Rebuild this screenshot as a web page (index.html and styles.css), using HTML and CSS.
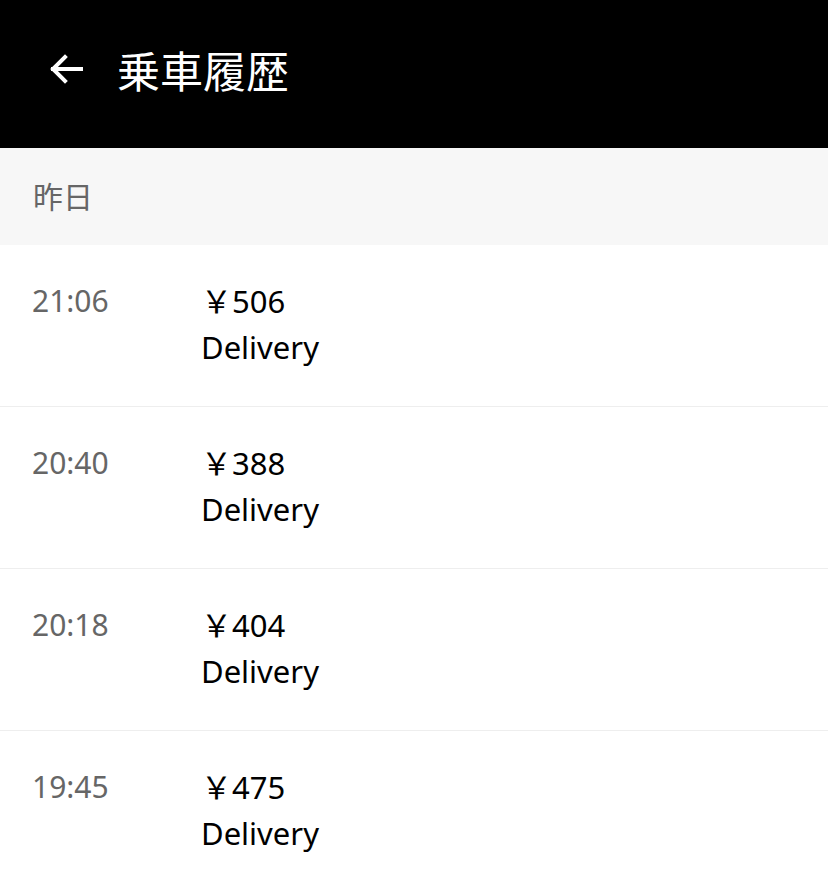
FILE: index.html
```html
<!DOCTYPE html>
<html lang="ja">
<head>
<meta charset="utf-8">
<link rel="stylesheet" href="styles.css">
</head>
<body>
<header class="topbar">
  <svg class="back" width="34" height="30" viewBox="0 0 34 30"><path d="M32 15H4M16 3L4 15l12 12" fill="none" stroke="#fff" stroke-width="4" stroke-linecap="square"/></svg>
  <h1 class="title">乗車履歴</h1>
</header>
<div class="section">昨日</div>
<ul class="list">
  <li class="row"><span class="time">21:06</span><div class="info"><div class="price">￥506</div><div class="kind">Delivery</div></div></li>
  <li class="row"><span class="time">20:40</span><div class="info"><div class="price">￥388</div><div class="kind">Delivery</div></div></li>
  <li class="row"><span class="time">20:18</span><div class="info"><div class="price">￥404</div><div class="kind">Delivery</div></div></li>
  <li class="row"><span class="time">19:45</span><div class="info"><div class="price">￥475</div><div class="kind">Delivery</div></div></li>
</ul>
</body>
</html>
```
FILE: styles.css
```css
html, body { margin: 0; padding: 0; background: #fff; }
body { font-family: "Noto Sans", "Noto Sans CJK JP", sans-serif; color: #000; }
.topbar {
  height: 148px; background: #000; display: flex; align-items: center;
  padding-left: 49px; box-sizing: border-box;
}
.back { display: block; margin-top: -10px; }
.title {
  margin: -10px 0 0 34px; color: #fff; font-weight: 400; font-size: 43px;
  font-family: "Noto Sans CJK JP", sans-serif; letter-spacing: 0;
}
.section {
  height: 97px; background: #f7f7f7; box-sizing: border-box;
  padding: 0 0 4px 33px; display: flex; align-items: center;
  font-size: 30px; color: #666; font-family: "Noto Sans CJK JP", sans-serif;
}
.list { list-style: none; margin: 0; padding: 0; }
.row {
  display: flex; height: 162px; box-sizing: border-box; padding: 33px 0 0 32px;
  border-bottom: 1.5px solid #eeeeee;
}
.time { width: 169px; font-size: 30px; color: #666; line-height: 46px; }
.info { font-size: 31px; line-height: 46px; }
</style>
```
